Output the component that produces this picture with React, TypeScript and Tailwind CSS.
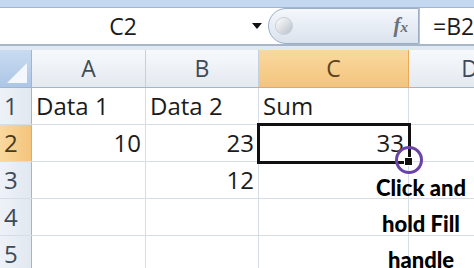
import React from 'react';

const cols = ['A', 'B', 'C', 'D'];

interface RowData {
  n: number;
  cells: (string | null)[];
  align: ('left' | 'right')[];
}

const rows: RowData[] = [
  {n: 1, cells: ['Data 1', 'Data 2', 'Sum', null], align: ['left', 'left', 'left', 'left']},
  {n: 2, cells: ['10', '23', '33', null], align: ['right', 'right', 'right', 'left']},
  {n: 3, cells: [null, '12', null, null], align: ['left', 'right', 'left', 'left']},
  {n: 4, cells: [null, null, null, null], align: ['left', 'left', 'left', 'left']},
  {n: 5, cells: [null, null, null, null], align: ['left', 'left', 'left', 'left']},
];

const gridCols = 'grid grid-cols-[32px_114px_113px_150px_122px] w-[531px]';

const App: React.FC = () => {
  return (
    <div className="relative w-[474px] h-[268px] overflow-hidden bg-white" style={{fontFamily: '"Open Sans", sans-serif'}}>
      {/* ribbon edge */}
      <div className="h-[8px] bg-[#c4d8ef] border-b border-[#9fb6d2]"></div>

      {/* formula bar */}
      <div className="flex h-[36px] items-stretch bg-white">
        <div className="w-[246px] shrink-0 flex items-center justify-center text-[23px] text-[#1b1b1b]">C2</div>
        <div className="w-[22px] shrink-0 flex items-center justify-center">
          <svg width="10" height="6" viewBox="0 0 10 6"><path d="M0 0h10L5 6z" fill="#111"/></svg>
        </div>
        <div className="relative w-[151px] shrink-0 flex items-center rounded-l-[18px] border border-[#9aaec6] bg-gradient-to-b from-[#f4f7fb] to-[#dbe3ee]">
          <div className="ml-[6px] w-[18px] h-[18px] rounded-full bg-gradient-to-br from-[#ffffff] to-[#b9bfc8] border border-[#c9d0da]"></div>
          <span className="ml-auto mr-[10px] text-[21px] italic font-bold text-[#6b7079]" style={{fontFamily: '"Liberation Serif", serif'}}>
            f<span className="text-[15px]">x</span>
          </span>
        </div>
        <div className="flex-1 min-w-0 overflow-hidden flex items-center pl-[13px] text-[23px] text-[#1b1b1b] border-l border-[#b6c3d3] whitespace-nowrap">=B2+C2</div>
      </div>

      {/* separator band */}
      <div className="h-[6px] bg-[#dfe8f3] border-t-2 border-[#a8b6c8]"></div>

      {/* column headers */}
      <div className={`${gridCols} h-[38px] border-b border-[#9eb6ce]`}>
        <div className="relative bg-gradient-to-b from-[#c9dbf0] to-[#adc6e6] border-r border-[#9eb6ce]">
          <svg className="absolute right-[4px] bottom-[4px]" width="20" height="20" viewBox="0 0 20 20">
            <path d="M20 0V20H0z" fill="#f4f8fd"/>
          </svg>
        </div>
        {cols.map((c) => (
          <div
            key={c}
            className={
              c === 'C'
                ? 'flex items-center justify-center text-[23px] text-[#5a4420] bg-gradient-to-b from-[#f9d99f] to-[#f4c47c] border-r border-[#e9aa55]'
                : 'flex items-center justify-center text-[23px] text-[#3f4a57] bg-gradient-to-b from-[#f7f9fc] to-[#e4e9f0] border-r border-[#c5d0dd]'
            }
          >
            {c}
          </div>
        ))}
      </div>

      {/* rows */}
      {rows.map((r) => (
        <div key={r.n} className={`${gridCols} h-[37px] border-b border-[#d6dde7]`}>
          <div
            className={
              r.n === 2
                ? 'flex items-center pl-[4px] text-[24px] text-[#4a3a1c] bg-gradient-to-r from-[#f9d99f] to-[#f4c47c] border-r border-[#e9aa55]'
                : 'flex items-center pl-[4px] text-[24px] text-[#3f4a57] bg-gradient-to-r from-[#eef2f8] to-[#e2e8f0] border-r border-[#9eb6ce]'
            }
          >
            {r.n}
          </div>
          {r.cells.map((v, i) => (
            <div
              key={i}
              className={`flex items-center px-[4px] text-[24px] text-[#1b1b1b] border-r border-[#d6dde7] whitespace-nowrap ${
                r.align[i] === 'right' ? 'justify-end' : 'justify-start'
              }`}
            >
              {v}
            </div>
          ))}
        </div>
      ))}

      {/* selected cell C2 */}
      <div className="absolute left-[257px] top-[123px] w-[154px] h-[41px] border-[3px] border-[#111]"></div>
      {/* fill handle */}
      <div className="absolute left-[404px] top-[157px] w-[9px] h-[9px] bg-[#111] border border-white"></div>
      {/* highlight circle */}
      <div className="absolute left-[395px] top-[146px] w-[28px] h-[28px] rounded-full border-[3px] border-[#6a43a8]"></div>

      {/* callout */}
      <div
        className="absolute left-[368px] top-[170px] w-[106px] text-center text-[22px] font-black leading-[36px] text-black"
        style={{fontFamily: 'Lato, sans-serif'}}
      >
        Click and<br />hold Fill<br />handle
      </div>
    </div>
  );
};

export default App;
